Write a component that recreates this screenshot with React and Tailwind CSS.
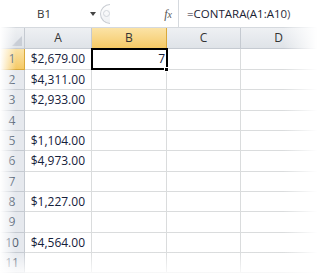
import React from 'react';

const rows = [
  { n: 1, a: '$2,679.00', h: 'h-[21px]' },
  { n: 2, a: '$4,311.00', h: 'h-[20px]' },
  { n: 3, a: '$2,933.00', h: 'h-[21px]' },
  { n: 4, a: '', h: 'h-[20px]' },
  { n: 5, a: '$1,104.00', h: 'h-[20px]' },
  { n: 6, a: '$4,973.00', h: 'h-[21px]' },
  { n: 7, a: '', h: 'h-[20px]' },
  { n: 8, a: '$1,227.00', h: 'h-[20px]' },
  { n: 9, a: '', h: 'h-[21px]' },
  { n: 10, a: '$4,564.00', h: 'h-[20px]' },
  { n: 11, a: '', h: 'h-[20px]' },
];

const font = { fontFamily: '"Open Sans", "Liberation Sans", sans-serif' };

export default function App() {
  return (
    <div className="relative w-[317px] h-[278px] overflow-hidden bg-white text-[#222]" style={font}>
      {/* Formula bar */}
      <div className="flex h-[28px] items-center border-b border-[#d5d9de] bg-white">
        <div className="w-[100px] flex items-center h-full">
          <span className="ml-[37px] text-[11.5px] font-medium text-[#333]">B1</span>
          <span className="ml-[39px] w-0 h-0 border-l-[3px] border-r-[3px] border-t-[4px] border-l-transparent border-r-transparent border-t-[#444]" />
        </div>
        <div className="relative w-[10px] h-[20px] rounded-l-full border border-r-0 border-[#c8ccd2] bg-gradient-to-b from-white to-[#eef0f3]">
          <div className="absolute left-[2px] top-[5px] w-[7px] h-[7px] rounded-full border border-[#d2d6dc]" />
        </div>
        <div className="w-[68px] h-full flex items-center justify-end pr-[6px]">
          <span className="text-[12px] italic text-[#555]" style={{ fontFamily: '"Liberation Serif", serif' }}>f<span className="text-[10px]">x</span></span>
        </div>
        <div className="flex-1 h-full flex items-center border-l border-[#d5d9de] pl-[8px]">
          <span className="text-[11.5px] font-medium text-[#1b2233]">=CONTARA(A1:A10)</span>
        </div>
      </div>

      {/* Grid */}
      <div className="grid grid-cols-[25px_67px_75px_74px_1fr]">
        <div className="h-[21px] bg-gradient-to-b from-[#eef0f3] to-[#dfe3e8] border-r border-b border-[#c5cad1] relative">
          <div className="absolute right-[2px] bottom-[2px] w-0 h-0" style={{ borderBottom: '10px solid #c9ced6', borderLeft: '10px solid transparent' }} />
        </div>
        <div className="h-[21px] flex items-center justify-center text-[12px] font-medium text-[#333] bg-gradient-to-b from-[#eef0f3] to-[#dfe3e8] border-r border-b border-[#c5cad1]">A</div>
        <div className="h-[21px] flex items-center justify-center text-[12px] font-medium text-[#333] bg-gradient-to-b from-[#fbe3a6] to-[#f5c964] border-r border-b border-[#d9a93c]">B</div>
        <div className="h-[21px] flex items-center justify-center text-[12px] font-medium text-[#333] bg-gradient-to-b from-[#eef0f3] to-[#dfe3e8] border-r border-b border-[#c5cad1]">C</div>
        <div className="h-[21px] flex items-center justify-center text-[12px] font-medium text-[#333] bg-gradient-to-b from-[#eef0f3] to-[#dfe3e8] border-r border-b border-[#c5cad1]">D</div>

        {rows.map((r) => (
          <React.Fragment key={r.n}>
            <div className={`${r.h} flex items-center justify-center text-[12px] text-[#4e5868] border-r border-b ${r.n === 1 ? 'bg-gradient-to-b from-[#fbe3a6] to-[#f5c964] border-[#d9a93c]' : 'bg-[#e6e9ee] border-[#c5cad1]'}`}>{r.n}</div>
            <div className={`${r.h} flex items-center justify-end pr-[6px] text-[12px] font-medium text-[#14203a] border-r border-b border-[#dadcdd]`}>{r.a}</div>
            {r.n === 1 ? (
              <div className={`${r.h} relative border-b border-[#dadcdd] border-r`}>
                <div className="absolute -left-[1px] -top-[1px] w-[77px] h-[22px] border-2 border-black flex items-center justify-end pr-[1px] text-[12px] font-medium text-[#14203a]">7</div>
                <div className="absolute -right-[3px] -bottom-[3px] w-[5px] h-[5px] bg-black border border-white" />
              </div>
            ) : (
              <div className={`${r.h} border-r border-b border-[#dadcdd]`} />
            )}
            <div className={`${r.h} border-r border-b border-[#dadcdd]`} />
            <div className={`${r.h} border-b border-[#dadcdd]`} />
          </React.Fragment>
        ))}
      </div>

      {/* Fade edges */}
      <div className="absolute left-0 top-0 h-full w-[16px] bg-gradient-to-r from-white to-transparent pointer-events-none" />
      <div className="absolute right-0 top-0 h-full w-[34px] bg-gradient-to-l from-white to-transparent pointer-events-none" />
      <div className="absolute left-0 bottom-0 w-full h-[26px] bg-gradient-to-t from-white to-transparent pointer-events-none" />
    </div>
  );
}
